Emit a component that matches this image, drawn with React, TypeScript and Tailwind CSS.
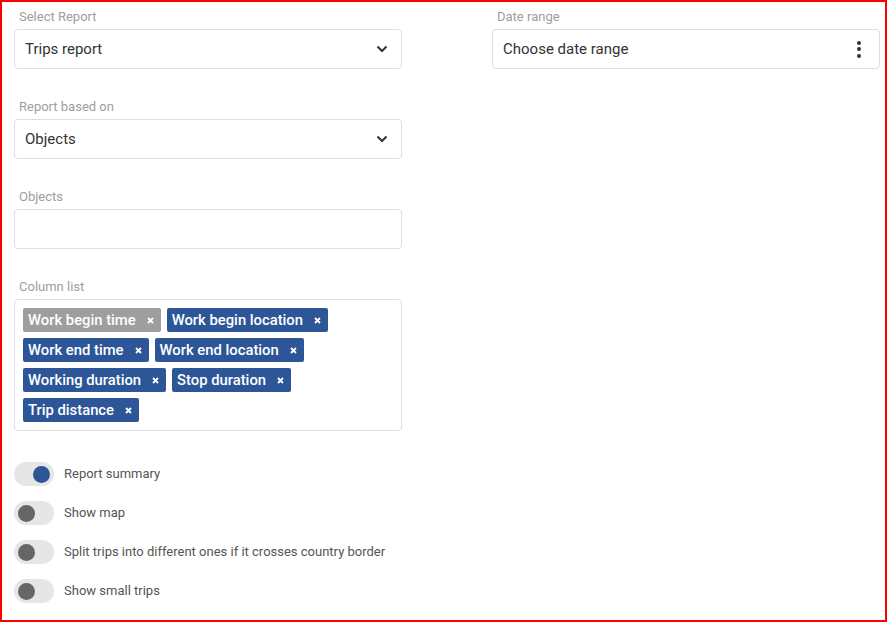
import React from "react";

const Chevron = () => (
  <svg width="12" height="8" viewBox="0 0 12 8" className="shrink-0">
    <path d="M1.5 1.5 L6 6 L10.5 1.5" fill="none" stroke="#333" strokeWidth="2" />
  </svg>
);

const Kebab = () => (
  <div className="flex flex-col items-center gap-[2.5px]">
    <span className="block w-[4px] h-[4px] rounded-full bg-[#333]" />
    <span className="block w-[4px] h-[4px] rounded-full bg-[#333]" />
    <span className="block w-[4px] h-[4px] rounded-full bg-[#333]" />
  </div>
);

const Label = ({ children }: { children: React.ReactNode }) => (
  <div className="pl-[5px] text-[13px] leading-[15px] h-[15px] mb-[5px] text-[#9e9e9e]">{children}</div>
);

const Chip = ({ text, gray }: { text: string; gray?: boolean }) => (
  <div
    className={`h-[24px] flex items-center pl-[5px] pr-[7px] rounded-[2px] text-white text-[14.8px] font-medium ${
      gray ? "bg-[#9e9e9e]" : "bg-[#2c5697]"
    }`}
  >
    <span className="leading-[24px]">{text}</span>
    <svg width="7" height="7" viewBox="0 0 7 7" className="ml-[11px]">
      <path d="M1 1 L6 6 M6 1 L1 6" stroke="white" strokeWidth="1.8" />
    </svg>
  </div>
);

const Toggle = ({ on, label }: { on?: boolean; label: string }) => (
  <div className="flex items-center h-[24px]">
    <div className={`w-[40px] h-[24px] rounded-full bg-[#e6e6e6] flex items-center px-[4px] ${on ? "justify-end" : "justify-start"}`}>
      <div className={`w-[17px] h-[17px] rounded-full ${on ? "bg-[#2c5697]" : "bg-[#666666]"}`} />
    </div>
    <span className="ml-[10px] text-[13px] text-[#555]">{label}</span>
  </div>
);

export default function App() {
  return (
    <div
      className="w-[887px] h-[622px] border-2 border-[#ff0000] bg-white flex pl-[12px] pt-[7px]"
      style={{ fontFamily: "Roboto, 'Liberation Sans', sans-serif" }}
    >
      <div className="w-[388px] flex flex-col">
        <Label>Select Report</Label>
        <div className="h-[40px] border border-[#dedede] rounded-[4px] flex items-center justify-between pl-[10px] pr-[13px] text-[15px] text-[#333]">
          <span>Trips report</span>
          <Chevron />
        </div>

        <div className="mt-[30px]">
          <Label>Report based on</Label>
          <div className="h-[40px] border border-[#dedede] rounded-[4px] flex items-center justify-between pl-[10px] pr-[13px] text-[15px] text-[#333]">
            <span>Objects</span>
            <Chevron />
          </div>
        </div>

        <div className="mt-[30px]">
          <Label>Objects</Label>
          <div className="h-[40px] border border-[#dedede] rounded-[4px]" />
        </div>

        <div className="mt-[30px]">
          <Label>Column list</Label>
          <div className="min-h-[132px] border border-[#dedede] rounded-[4px] pl-[8px] pr-[8px] pt-[8px] pb-[8px] flex flex-wrap content-start gap-[6px]">
            <Chip text="Work begin time" gray />
            <Chip text="Work begin location" />
            <Chip text="Work end time" />
            <Chip text="Work end location" />
            <Chip text="Working duration" />
            <Chip text="Stop duration" />
            <Chip text="Trip distance" />
          </div>
        </div>

        <div className="mt-[31px] flex flex-col gap-[15px]">
          <Toggle on label="Report summary" />
          <Toggle label="Show map" />
          <Toggle label="Split trips into different ones if it crosses country border" />
          <Toggle label="Show small trips" />
        </div>
      </div>

      <div className="w-[388px] ml-[90px] flex flex-col">
        <Label>Date range</Label>
        <div className="h-[40px] border border-[#dedede] rounded-[4px] flex items-center justify-between pl-[10px] pr-[18px] text-[15px] text-[#333]">
          <span>Choose date range</span>
          <Kebab />
        </div>
      </div>
    </div>
  );
}
